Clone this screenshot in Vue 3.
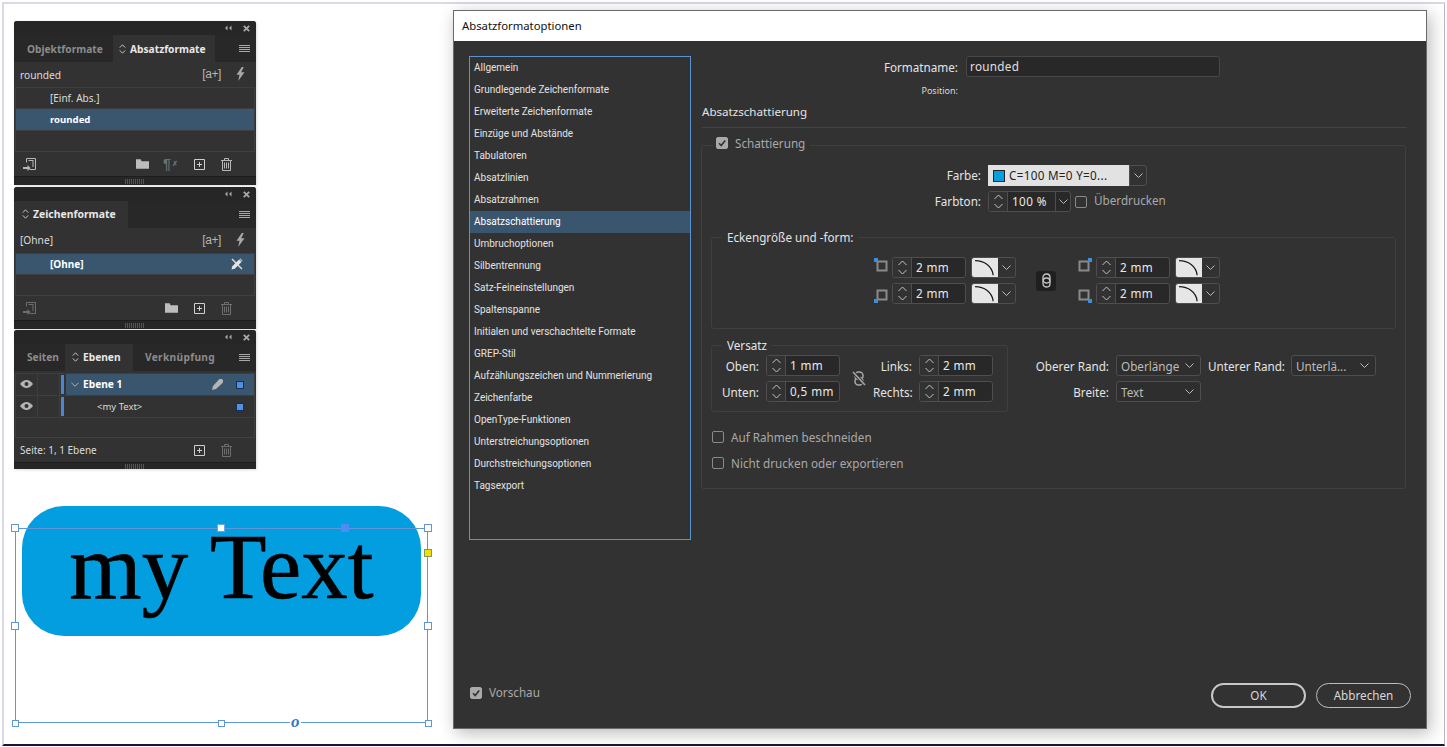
<script setup>
const navItems = ['Allgemein','Grundlegende Zeichenformate','Erweiterte Zeichenformate','Einzüge und Abstände','Tabulatoren','Absatzlinien','Absatzrahmen','Absatzschattierung','Umbruchoptionen','Silbentrennung','Satz-Feineinstellungen','Spaltenspanne','Initialen und verschachtelte Formate','GREP-Stil','Aufzählungszeichen und Nummerierung','Zeichenfarbe','OpenType-Funktionen','Unterstreichungsoptionen','Durchstreichungsoptionen','Tagsexport']
const leftCorners = ['#i-tl', '#i-bl']
const rightCorners = ['#i-tr', '#i-br']
const handles = [
  { x: 15, y: 528, s: 8 }, { x: 428, y: 528, s: 8 },
  { x: 15, y: 626, s: 8 }, { x: 428, y: 626, s: 8 },
  { x: 15, y: 723, s: 7 }, { x: 221, y: 723, s: 7 }, { x: 428, y: 723, s: 7 }
]
</script>

<template>
  <div class="page">
    <svg class="defs" width="0" height="0">
      <symbol id="i-chev" viewBox="0 0 9 5"><path d="M.5.5 4.500 4.500 8.500.5" fill="none" stroke="#bdbdbd"/></symbol>
      <symbol id="i-step" viewBox="0 0 9 15"><path d="M.5 5 4.500 1 8.500 5M.5 10 4.500 14 8.500 10" fill="none" stroke="#c4c4c4"/></symbol>
      <symbol id="i-sort" viewBox="0 0 7 10"><path d="M.8 3.600 3.500.8 6.200 3.600M.8 6.400 3.500 9.200 6.200 6.400" fill="none" stroke="#c4c4c4"/></symbol>
      <symbol id="i-burger" viewBox="0 0 11 7"><path d="M0 .5h11M0 2.500h11M0 4.500h11M0 6.500h11" stroke="#a8a8a8"/></symbol>
      <symbol id="i-collapse" viewBox="0 0 8 6"><path d="M3.500.5 1 3l2.500 2.500V.5ZM7.500.5 5 3l2.500 2.500V.5Z" fill="#a8a8a8"/></symbol>
      <symbol id="i-close" viewBox="0 0 7 7"><path d="M.8.8l5.400 5.400M6.200.8.8 6.200" stroke="#a8a8a8" stroke-width="1.800"/></symbol>
      <symbol id="i-bolt" viewBox="0 0 9 14"><path d="M5.800 0 .5 7.800h3L2.200 14 8.500 5.200H5.200L7.800 0Z" fill="currentColor"/></symbol>
      <symbol id="i-import" viewBox="0 0 13 13"><path d="M3.500 4.500V.5h9v11h-6" fill="none" stroke="currentColor"/><path d="M5.500 3v-1h5v7h-1V3Z" fill="currentColor"/><path d="M0 9h4.500V7l3 3-3 3v-2H0Z" fill="currentColor"/></symbol>
      <symbol id="i-folder" viewBox="0 0 14 10"><path d="M0 0h5l1 2h8v8H0Z" fill="currentColor"/></symbol>
      <symbol id="i-new" viewBox="0 0 11 11"><path d="M.5.5h10v10H.5ZM5.500 3v5M3 5.500h5" fill="none" stroke="currentColor"/></symbol>
      <symbol id="i-trash" viewBox="0 0 11 13"><path d="M0 2.500h11M3.500 2.500V.5h4v2M1.500 2.500v10h8v-10M3.500 4.500v6M5.500 4.500v6M7.500 4.500v6" fill="none" stroke="currentColor"/></symbol>
      <symbol id="i-eye" viewBox="0 0 13 8"><path d="M0 4C2 1.200 4.200 0 6.500 0S11 1.200 13 4c-2 2.800-4.200 4-6.500 4S2 6.800 0 4Z" fill="#b5b5b5"/><circle cx="6.500" cy="4" r="2" fill="#323232"/></symbol>
      <symbol id="i-pen" viewBox="0 0 11 11"><path d="M0 11l1-4 6-6.500a1.500 1.500 0 0 1 3.500 3.500l-6.500 6Z" fill="#b5b5b5"/></symbol>
      <symbol id="i-tools" viewBox="0 0 12 12"><path d="M1 1 11 11" stroke="#d8d8d8" stroke-width="1.500"/><path d="M.5 11.500l.8-3.300L8 1.500 10.500 4 3.800 10.700Z" fill="#e4e4e4"/><path d="M8.800.8l2.400 2.400" stroke="#a8b4c0" stroke-width="1.500"/></symbol>
      <symbol id="i-tl" viewBox="0 0 14 14"><rect x="3.500" y="3.500" width="9" height="9" fill="none" stroke="#8a8a8a" stroke-width="2"/><rect x="0" y="0" width="4" height="4" fill="#3f8ddc"/></symbol>
      <symbol id="i-bl" viewBox="0 0 14 14"><rect x="3.500" y="1.500" width="9" height="9" fill="none" stroke="#8a8a8a" stroke-width="2"/><rect x="0" y="10" width="4" height="4" fill="#3f8ddc"/></symbol>
      <symbol id="i-tr" viewBox="0 0 14 14"><rect x="1.500" y="3.500" width="9" height="9" fill="none" stroke="#8a8a8a" stroke-width="2"/><rect x="10" y="0" width="4" height="4" fill="#3f8ddc"/></symbol>
      <symbol id="i-br" viewBox="0 0 14 14"><rect x="1.500" y="1.500" width="9" height="9" fill="none" stroke="#8a8a8a" stroke-width="2"/><rect x="10" y="10" width="4" height="4" fill="#3f8ddc"/></symbol>
      <symbol id="i-curve" viewBox="0 0 26 21"><path d="M2 3C12 3 21 9 22 19" fill="none" stroke="#1a1a1a" stroke-width="1.400"/></symbol>
      <symbol id="i-link" viewBox="0 0 9 15"><rect x="1" y="1" width="7" height="9" rx="3.200" fill="none" stroke="#c4c4c4" stroke-width="1.300"/><rect x="1" y="5" width="7" height="9" rx="3.200" fill="none" stroke="#c4c4c4" stroke-width="1.300"/></symbol>
      <symbol id="i-unlink" viewBox="0 0 14 15"><rect x="3" y="1" width="8" height="7.500" rx="3.500" fill="none" stroke="#a8a8a8" stroke-width="1.500"/><rect x="3" y="6.500" width="8" height="7.500" rx="3.500" fill="none" stroke="#a8a8a8" stroke-width="1.500"/><path d="M1 1 13 14" stroke="#323232" stroke-width="3.500"/><path d="M1 1 13 14" stroke="#a8a8a8" stroke-width="1.600"/></symbol>
    </svg>

    <section class="panel p1">
      <div class="topbar"><svg class="ic-col"><use href="#i-collapse"/></svg><svg class="ic-x"><use href="#i-close"/></svg></div>
      <div class="tabs">
        <div class="tab off">Objektformate</div>
        <div class="tab on tab-abs"><svg class="ic-sort"><use href="#i-sort"/></svg>Absatzformate</div>
        <svg class="ic-burger"><use href="#i-burger"/></svg>
      </div>
      <div class="cur"><span>rounded</span><span class="aplus">[a+]</span><svg class="ic-bolt"><use href="#i-bolt"/></svg></div>
      <div class="list list1">
        <div class="row"><span class="indent">[Einf. Abs.]</span></div>
        <div class="row sel"><span class="indent strong tight">rounded</span></div>
      </div>
      <div class="foot">
        <svg class="ic-import"><use href="#i-import"/></svg>
        <span class="spring"></span>
        <svg class="ic-folder"><use href="#i-folder"/></svg>
        <span class="para">¶<i>✗</i></span>
        <svg class="ic-new"><use href="#i-new"/></svg>
        <svg class="ic-trash"><use href="#i-trash"/></svg>
      </div>
      <div class="strip"><span class="grip"></span></div>
    </section>

    <section class="panel p2">
      <div class="topbar"><svg class="ic-col"><use href="#i-collapse"/></svg><svg class="ic-x"><use href="#i-close"/></svg></div>
      <div class="tabs">
        <div class="tab on tab-zei"><svg class="ic-sort"><use href="#i-sort"/></svg>Zeichenformate</div>
        <svg class="ic-burger"><use href="#i-burger"/></svg>
      </div>
      <div class="cur"><span>[Ohne]</span><span class="aplus">[a+]</span><svg class="ic-bolt"><use href="#i-bolt"/></svg></div>
      <div class="list list2">
        <div class="row sel"><span class="indent strong">[Ohne]</span><svg class="ic-tools"><use href="#i-tools"/></svg></div>
      </div>
      <div class="foot">
        <svg class="ic-import dim"><use href="#i-import"/></svg>
        <span class="spring"></span>
        <svg class="ic-folder"><use href="#i-folder"/></svg>
        <svg class="ic-new"><use href="#i-new"/></svg>
        <svg class="ic-trash dim"><use href="#i-trash"/></svg>
      </div>
      <div class="strip"><span class="grip"></span></div>
    </section>

    <section class="panel p3">
      <div class="topbar"><svg class="ic-col"><use href="#i-collapse"/></svg><svg class="ic-x"><use href="#i-close"/></svg></div>
      <div class="tabs">
        <div class="tab off tab-sei">Seiten</div>
        <div class="tab on tab-ebe"><svg class="ic-sort"><use href="#i-sort"/></svg>Ebenen</div>
        <div class="tab off tab-ver">Verknüpfung</div>
        <svg class="ic-burger"><use href="#i-burger"/></svg>
      </div>
      <div class="list list3">
        <div class="lrow">
          <span class="cell"><svg class="ic-eye"><use href="#i-eye"/></svg></span><span class="cell"></span><span class="bar"></span>
          <span class="lname sel"><svg class="ic-lchev"><use href="#i-chev"/></svg><b>Ebene 1</b><span class="spring"></span><svg class="ic-pen"><use href="#i-pen"/></svg><span class="sq"></span></span>
        </div>
        <div class="lrow">
          <span class="cell"><svg class="ic-eye"><use href="#i-eye"/></svg></span><span class="cell"></span><span class="bar"></span>
          <span class="lname"><span class="child">&lt;my Text&gt;</span><span class="spring"></span><span class="sq"></span></span>
        </div>
      </div>
      <div class="foot">
        <span class="pageinfo">Seite: 1, 1 Ebene</span>
        <span class="spring"></span>
        <svg class="ic-new"><use href="#i-new"/></svg>
        <svg class="ic-trash dim"><use href="#i-trash"/></svg>
      </div>
      <div class="strip"><span class="grip"></span></div>
    </section>

    <div class="shape"><span>my Text</span></div>
    <div class="frame"></div>
    <span v-for="(h, i) in handles" :key="i" class="handle" :style="{ left: h.x - h.s / 2 + 'px', top: h.y - h.s / 2 + 'px', width: h.s + 'px', height: h.s + 'px' }"></span>
    <span class="h-top"></span>
    <span class="h-blue"></span>
    <span class="h-yellow"></span>
    <span class="h-o">o</span>

    <section class="dialog">
      <header class="title">Absatzformatoptionen</header>
      <div class="dbody">
        <div class="columns">
          <nav class="nav">
            <div v-for="n in navItems" :key="n" class="nav-item" :class="{ active: n === 'Absatzschattierung' }">{{ n }}</div>
          </nav>
          <div class="main">
            <div class="name-row">
              <label>Formatname:</label>
              <div class="name-input">rounded</div>
            </div>
            <div class="pos">Position:</div>
            <h2 class="heading">Absatzschattierung</h2>

            <fieldset class="outer">
              <legend class="lg-outer"><span class="cb checked"><svg viewBox="0 0 12 12"><path d="M3 6.200 5.200 8.500 9.200 3.500" fill="none" stroke="#323232" stroke-width="1.600"/></svg></span><span class="muted lg-text">Schattierung</span></legend>

              <div class="color-grid">
                <label>Farbe:</label>
                <div class="colorbox">
                  <div class="swatchval"><span class="swatch"></span><span class="swatch-text">C=100 M=0 Y=0...</span></div>
                  <div class="ddbtn"><svg class="ic-chev"><use href="#i-chev"/></svg></div>
                </div>
                <label>Farbton:</label>
                <div class="tone">
                  <div class="spin tone-spin">
                    <span class="stepper"><svg class="ic-step"><use href="#i-step"/></svg></span>
                    <span class="val">100 %</span>
                    <span class="ddbtn small"><svg class="ic-chev"><use href="#i-chev"/></svg></span>
                  </div>
                  <span class="cb"></span>
                  <span class="muted over">Überdrucken</span>
                </div>
              </div>

              <fieldset class="inner corners">
                <legend class="lg-inner">Eckengröße und -form:</legend>
                <div class="corner-layout">
                  <div class="corner-col">
                    <div v-for="ic in leftCorners" :key="ic" class="corner-row">
                      <svg class="ic-corner"><use :href="ic"/></svg>
                      <div class="spin"><span class="stepper"><svg class="ic-step"><use href="#i-step"/></svg></span><span class="val">2 mm</span></div>
                      <div class="shapepick"><span class="curve"><svg><use href="#i-curve"/></svg></span><span class="ddbtn"><svg class="ic-chev"><use href="#i-chev"/></svg></span></div>
                    </div>
                  </div>
                  <div class="linkbtn"><svg class="ic-link"><use href="#i-link"/></svg></div>
                  <div class="corner-col">
                    <div v-for="ic in rightCorners" :key="ic" class="corner-row">
                      <svg class="ic-corner"><use :href="ic"/></svg>
                      <div class="spin"><span class="stepper"><svg class="ic-step"><use href="#i-step"/></svg></span><span class="val">2 mm</span></div>
                      <div class="shapepick"><span class="curve"><svg><use href="#i-curve"/></svg></span><span class="ddbtn"><svg class="ic-chev"><use href="#i-chev"/></svg></span></div>
                    </div>
                  </div>
                </div>
              </fieldset>

              <div class="offset-row">
                <fieldset class="inner versatz">
                  <legend class="lg-inner">Versatz</legend>
                  <div class="versatz-grid">
                    <label>Oben:</label>
                    <div class="spin"><span class="stepper"><svg class="ic-step"><use href="#i-step"/></svg></span><span class="val">1 mm</span></div>
                    <svg class="ic-unlink"><use href="#i-unlink"/></svg>
                    <label>Links:</label>
                    <div class="spin"><span class="stepper"><svg class="ic-step"><use href="#i-step"/></svg></span><span class="val">2 mm</span></div>
                    <label>Unten:</label>
                    <div class="spin"><span class="stepper"><svg class="ic-step"><use href="#i-step"/></svg></span><span class="val">0,5 mm</span></div>
                    <label>Rechts:</label>
                    <div class="spin"><span class="stepper"><svg class="ic-step"><use href="#i-step"/></svg></span><span class="val">2 mm</span></div>
                  </div>
                </fieldset>
                <div class="edge-grid">
                  <label>Oberer Rand:</label>
                  <div class="select"><span>Oberlänge</span><svg class="ic-chev"><use href="#i-chev"/></svg></div>
                  <label>Unterer Rand:</label>
                  <div class="select"><span>Unterlä...</span><svg class="ic-chev"><use href="#i-chev"/></svg></div>
                  <label>Breite:</label>
                  <div class="select"><span>Text</span><svg class="ic-chev"><use href="#i-chev"/></svg></div>
                </div>
              </div>

              <div class="check-row first"><span class="cb"></span><span class="muted">Auf Rahmen beschneiden</span></div>
              <div class="check-row"><span class="cb"></span><span class="muted">Nicht drucken oder exportieren</span></div>
            </fieldset>
          </div>
        </div>
        <footer class="dfoot">
          <span class="cb checked raised"><svg viewBox="0 0 12 12"><path d="M3 6.200 5.200 8.500 9.200 3.500" fill="none" stroke="#323232" stroke-width="1.600"/></svg></span>
          <span class="muted preview">Vorschau</span>
          <span class="spring"></span>
          <button class="btn primary">OK</button>
          <button class="btn">Abbrechen</button>
        </footer>
      </div>
    </section>
  </div>
</template>

<style>
html, body { margin: 0; background: #fff; overflow: hidden; }
</style>

<style scoped>
.page { position: relative; width: 1447px; height: 747px; overflow: hidden; background: #fff; font-family: "Noto Sans", "Open Sans", sans-serif; box-sizing: border-box; }
.page::before { content: ""; position: absolute; left: 2px; top: 2px; width: 1440px; height: 740px; border-left: 2px solid #d8d8e8; border-top: 2px solid #d8d8e8; border-bottom: 2px solid #16163a; border-right: 1px solid #b8b8cc; }
.defs { position: absolute; }
.spring { flex: 1; }
svg { display: block; }

.panel { position: absolute; left: 14px; width: 242px; background: #323232; color: #dcdcdc; font-size: 10px; display: flex; flex-direction: column; border-radius: 3px 3px 0 0; box-shadow: 1px 1px 3px rgba(0,0,0,.14); }
.p1 { top: 21px; height: 164px; }
.p2 { top: 187px; height: 142px; }
.p3 { top: 330px; height: 139px; }
.topbar { height: 14px; flex: none; background: #262626; display: flex; align-items: center; justify-content: flex-end; padding-right: 6px; gap: 11px; border-radius: 3px 3px 0 0; }
.ic-col { width: 8px; height: 6px; }
.ic-x { width: 7px; height: 7px; }
.tabs { height: 27px; flex: none; display: flex; align-items: stretch; background: #282828; position: relative; font-weight: 700; font-size: 10.2px; }
.p2 .tab, .p3 .tab { padding-bottom: 2px; }
.tab { display: flex; align-items: center; box-sizing: border-box; white-space: nowrap; }
.tab.off { color: #8c8c8c; padding-left: 13px; width: 99px; }
.tab.on { background: #323232; color: #e8e8e8; }
.tab-abs { width: 102px; padding-left: 6px; }
.tab-zei { width: 114px; padding-left: 8px; font-size: 10.4px; }
.tab-sei.off { width: 51px; }
.tab-ebe { width: 68px; padding-left: 7px; }
.tab-ver.off { width: 82px; padding-left: 12px; overflow: hidden; letter-spacing: .3px; }
.ic-sort { width: 7px; height: 10px; margin-right: 4px; flex: none; }
.ic-burger { position: absolute; right: 6px; top: 10px; width: 11px; height: 7px; }
.cur { height: 25px; flex: none; display: flex; align-items: center; padding: 0 11px 0 6px; font-size: 10.2px; }
.cur > span:first-child { flex: 1; }
.p2 .cur > span:first-child { padding-bottom: 2px; }
.aplus { font-size: 12px; letter-spacing: -.4px; color: #b5b5b5; font-family: "Liberation Sans", sans-serif; margin-right: 15px; padding-bottom: 2px; }
.ic-bolt { width: 9px; height: 14px; color: #a8a8a8; margin-top: -2px; }
.list { flex: 1; margin: 0 1px; border: 1px solid #3e3e3e; border-bottom-color: #414141; box-sizing: border-box; min-height: 0; }
.row { height: 22px; box-sizing: border-box; border-bottom: 1px solid #3e3e3e; display: flex; align-items: center; padding: 0 11px 1px 34px; justify-content: space-between; }
.list1 .row:first-child { height: 21px; }
.list2 .row { height: 21px; }
.row.sel { background: #3a566f; color: #fff; }
.strong { font-weight: 700; }
.tight { font-size: 9.6px; }
.ic-tools { width: 12px; height: 12px; }
.foot { height: 24px; flex: none; display: flex; align-items: center; padding-left: 9px; padding-right: 24px; color: #b8b8b8; gap: 0; }
.ic-import { width: 13px; height: 13px; }
.ic-folder { width: 13px; height: 10px; margin-right: 14px; color: #bdbdbd; }
.p2 .ic-folder { margin-right: 16px; }
.ic-new { width: 11px; height: 11px; color: #cfcfcf; margin-right: 16px; }
.ic-trash { width: 11px; height: 13px; color: #b8b8b8; }
.dim { opacity: .45; }
.para { width: 21px; margin-right: 10px; font-size: 14px; color: #6f6f6f; font-family: "Liberation Sans", sans-serif; font-weight: 700; display: flex; align-items: center; }
.para i { font-size: 7px; font-style: normal; margin-left: 1px; }
.pageinfo { font-size: 10px; margin-left: -3px; color: #dcdcdc; }
.strip { height: 9px; flex: none; background: #262626; border-top: 1px solid #1d1d1d; box-sizing: border-box; display: flex; justify-content: center; align-items: center; }
.p3 .strip { height: 7px; }
.grip { width: 20px; height: 5px; background: repeating-linear-gradient(90deg, #555 0 1px, transparent 1px 2px); }
.list3 { margin-top: 2px; }
.lrow { display: flex; height: 21px; border-bottom: 1px solid #3e3e3e; align-items: stretch; box-sizing: content-box; }
.cell { width: 21px; border-right: 1px solid #3e3e3e; display: flex; align-items: center; justify-content: center; }
.ic-eye { width: 13px; height: 8px; margin-top: -2px; }
.bar { width: 3px; background: #4a86d4; margin: 1px 2px 1px 1px; flex: none; }
.lname { flex: 1; display: flex; align-items: center; padding-right: 10px; }
.lname.sel { background: #3a566f; color: #fff; }
.ic-lchev { width: 8px; height: 5px; margin: 0 4px 0 5px; }
.lname b { font-weight: 700; font-size: 10.2px; padding-bottom: 2px; }
.child { margin-left: 31px; font-size: 9.5px; }
.ic-pen { width: 11px; height: 11px; margin-right: 13px; }
.sq { width: 6px; height: 6px; background: #4f8fe6; border: 1px solid #16305a; }

.shape { position: absolute; left: 22px; top: 506px; width: 399px; height: 130px; border-radius: 42px; background: #029ee0; color: #000; font-family: "Liberation Serif", serif; font-size: 93px; -webkit-text-stroke: .6px #000; line-height: 1; display: flex; justify-content: center; padding-top: 14px; box-sizing: border-box; }
.frame { position: absolute; left: 15px; top: 528px; width: 413px; height: 195px; border: 1px solid #5f97d6; box-sizing: border-box; }
.handle { position: absolute; background: #fff; border: 1px solid #5f97d6; box-sizing: border-box; }
.h-top { position: absolute; left: 218px; top: 525px; width: 6px; height: 6px; background: #fff; box-shadow: 0 0 0 1px #6aa5e6; }
.h-blue { position: absolute; left: 341px; top: 524px; width: 8px; height: 8px; background: #4d8cf5; }
.h-yellow { position: absolute; left: 424px; top: 549px; width: 8px; height: 8px; background: #f4e000; border: 1px solid #7f9a60; box-sizing: border-box; }
.h-o { position: absolute; left: 290px; top: 713px; background: #fff; color: #2f78c8; font-family: "Liberation Serif", serif; font-style: italic; font-size: 17px; font-weight: 700; line-height: 18px; padding: 0 1px; }

.dialog { position: absolute; left: 453px; top: 10px; width: 974px; height: 719px; display: flex; flex-direction: column; box-sizing: border-box; border: 1px solid #6a6a6a; box-shadow: 3px 4px 16px rgba(0,0,0,.28); background: #323232; }
.title { height: 30px; flex: none; background: #fff; color: #111; font-size: 11.3px; line-height: 30px; padding-left: 8px; }
.dbody { flex: 1; display: flex; flex-direction: column; min-height: 0; color: #e4e4e4; font-size: 11.7px; }
.columns { flex: 1; display: flex; padding: 15px 0 0 15px; align-items: flex-start; }
.nav { width: 222px; height: 484px; border: 1px solid #5b93cf; box-sizing: border-box; flex: none; font-family: Roboto, "Noto Sans", sans-serif; font-size: 10px; }
.nav-item { height: 22px; line-height: 21px; padding-left: 4px; color: #e2e2e2; white-space: nowrap; }
.nav-item.active { background: #3a566f; color: #fff; }
.main { margin-left: 11px; width: 705px; }
label { text-align: right; white-space: nowrap; color: #e4e4e4; }
.color-grid label { padding-bottom: 2px; }
.name-row { display: grid; grid-template-columns: 256px 254px; column-gap: 8px; height: 21px; align-items: center; }
.name-input { height: 21px; box-sizing: border-box; border: 1px solid #474747; border-radius: 3px; background: #282828; padding-left: 3px; line-height: 18px; letter-spacing: .3px; color: #e0e0e0; }
.pos { margin-top: 7px; height: 14px; width: 256px; text-align: right; font-size: 9px; line-height: 14px; color: #d8d8d8; }
.heading { margin: 6px 0 0; padding-bottom: 7px; height: 16px; box-sizing: content-box; font-size: 11.6px; font-weight: 400; line-height: 16px; border-bottom: 1px solid #434343; color: #e4e4e4; }
fieldset { margin: 0; min-width: 0; box-sizing: border-box; }
.outer { margin: 9px 0 0 -1px; width: 705px; height: 352px; padding: 0 9px 0 9px; border: 1px solid #404040; border-radius: 3px; }
.lg-outer { margin-left: 2px; padding: 0 5px 0 3px; height: 16px; display: flex; align-items: flex-start; gap: 7px; }
.lg-text { line-height: 13px; }
.muted { color: #a9a9a9; white-space: nowrap; }
.cb { width: 12px; height: 12px; box-sizing: border-box; border: 1px solid #8a8a8a; border-radius: 2px; flex: none; display: block; }
.cb.checked { background: #a9a9a9; border-color: #a9a9a9; }
.cb svg { width: 12px; height: 12px; margin: -1px; }
.color-grid { display: grid; grid-template-columns: 270px auto; column-gap: 7px; row-gap: 5px; margin-top: 12px; justify-content: start; align-items: center; }
.colorbox { width: 159px; height: 21px; display: flex; }
.swatchval { width: 141px; background: #e2e2e2; color: #222; display: flex; align-items: center; padding-left: 5px; box-sizing: border-box; letter-spacing: .3px; white-space: nowrap; }
.swatch-text { padding-bottom: 2px; }
.swatch { width: 12px; height: 12px; background: #029ee0; border: 1px solid #222; margin-right: 4px; box-sizing: border-box; flex: none; }
.ddbtn { width: 18px; border: 1px solid #4e4e4e; border-radius: 0 3px 3px 0; display: flex; align-items: center; justify-content: center; box-sizing: border-box; flex: none; }
.ddbtn.small { border: 0; border-left: 1px solid #4e4e4e; height: 100%; width: 15px; }
.ic-chev { width: 9px; height: 5px; flex: none; }
.tone { display: flex; align-items: center; height: 21px; }
.spin { width: 74px; height: 21px; box-sizing: border-box; border: 1px solid #4e4e4e; border-radius: 3px; display: flex; align-items: stretch; background: #282828; }
.tone-spin { width: 83px; margin-right: 4px; }
.stepper { width: 18px; flex: none; border-right: 1px solid #4e4e4e; display: flex; align-items: center; justify-content: center; background: #323232; border-radius: 3px 0 0 3px; }
.ic-step { width: 9px; height: 15px; }
.val { flex: 1; padding-left: 4px; line-height: 18px; color: #e8e8e8; letter-spacing: .4px; white-space: nowrap; }
.over { margin-left: 7px; padding-bottom: 3px; }
.inner { border: 1px solid #3f3f3f; border-radius: 3px; padding: 0; }
.lg-inner { margin-left: 10px; padding: 0 5px; height: 16px; line-height: 16px; color: #e4e4e4; white-space: nowrap; }
.corners { margin-top: 17px; height: 100px; }
.corner-layout { display: flex; align-items: center; margin: 12px 0 0 162px; }
.corner-col { display: flex; flex-direction: column; gap: 5px; width: 142px; }
.corner-row { display: flex; align-items: center; height: 21px; }
.ic-corner { width: 14px; height: 14px; margin-right: 4px; flex: none; }
.corner-row:first-child .ic-corner { margin-top: -5px; }
.corner-row:last-child .ic-corner { margin-top: 5px; }
.shapepick { width: 45px; height: 21px; margin-left: 5px; display: flex; border: 1px solid #4e4e4e; border-radius: 3px; box-sizing: border-box; overflow: hidden; }
.curve { width: 26px; background: #e6e6e6; flex: none; }
.curve svg { width: 26px; height: 19px; }
.shapepick .ddbtn { border: 0; flex: 1; }
.linkbtn { width: 20px; height: 20px; margin: 0 22px 0 20px; background: #1f1f1f; border-radius: 3px; display: flex; align-items: center; justify-content: center; flex: none; }
.ic-link { width: 9px; height: 15px; }
.offset-row { display: flex; align-items: flex-start; margin-top: 8px; }
.versatz { width: 297px; height: 75px; }
.versatz-grid { display: grid; grid-template-columns: 47px 74px 19px 39px 74px; grid-template-rows: 21px 21px; column-gap: 7px; row-gap: 5px; align-items: center; margin-top: 2px; }
.ic-unlink { width: 14px; height: 15px; grid-row: 1 / span 2; grid-column: 3; justify-self: end; }
.edge-grid { display: grid; grid-template-columns: 74px 85px 76px 85px; grid-template-rows: 21px 21px; column-gap: 7px; row-gap: 5px; align-items: center; margin: 18px 0 0 27px; }
.select { height: 21px; box-sizing: border-box; border: 1px solid #4e4e4e; border-radius: 3px; background: #2e2e2e; display: flex; align-items: center; justify-content: space-between; padding: 0 6px 0 4px; color: #bcbcbc; white-space: nowrap; }
.check-row { display: flex; align-items: center; gap: 7px; height: 16px; margin-top: 10px; margin-left: 1px; }
.check-row.first { margin-top: 17px; }
.dfoot { flex: none; display: flex; align-items: center; height: 25px; padding: 0 15px 20px 16px; gap: 7px; }
.raised { margin-top: -6px; }
.preview { margin-top: -8px; }
.btn { width: 95px; height: 25px; box-sizing: border-box; border: 1px solid #bdbdbd; border-radius: 13px; background: transparent; color: #d8d8d8; font: inherit; font-size: 11.7px; padding: 0 0 2px; margin-left: 3px; }
.btn.primary { border: 2px solid #c8c8c8; }
</style>
